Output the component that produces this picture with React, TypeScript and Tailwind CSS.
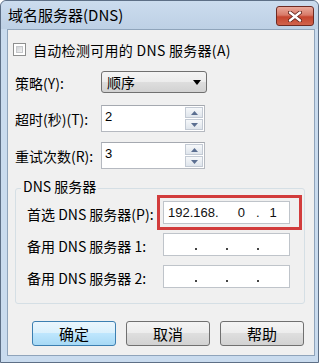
const btnGray =
  'bg-[linear-gradient(#f4f4f4_0%,#ececec_50%,#dedede_50%,#d2d2d2_100%)] border-[#707070]';
const btnBlue =
  'bg-[linear-gradient(#eaf6fd_0%,#d9f0fc_50%,#bee6fd_50%,#a7d9f5_100%)] border-[#3c7fb1]';

function CloseButton() {
  return (
    <div className="ml-auto mr-[4px] mt-[5px] w-[38px] h-[20px] rounded-[3px] border border-[#6e2a22] bg-[linear-gradient(#e9a99b_0%,#d87a69_45%,#c5452f_55%,#d0634c_100%)] flex items-center justify-center">
      <svg width="14" height="11" viewBox="0 0 14 11">
        <path d="M2 1.5 L12 9.5 M12 1.5 L2 9.5" stroke="#5a1d16" strokeWidth="4" strokeLinecap="round" />
        <path d="M2 1.5 L12 9.5 M12 1.5 L2 9.5" stroke="#ffffff" strokeWidth="2.4" strokeLinecap="round" />
      </svg>
    </div>
  );
}

function Checkbox() {
  return (
    <div className="w-[13px] h-[13px] border border-[#8e8f8f] bg-white p-[2px] shrink-0">
      <div className="w-full h-full bg-[linear-gradient(135deg,#cfd2d6,#f3f3f3)] border border-[#c6c8cb]" />
    </div>
  );
}

function SpinInput({ value }: { value: string }) {
  return (
    <div className="w-[104px] h-[27px] border border-[#b5b9c0] border-t-[#a5a9b0] bg-white flex">
      <span className="flex-1 pl-[3px] pt-[3px] text-[13px] leading-[16px] font-['Liberation_Sans',sans-serif]">
        {value}
      </span>
      <div className="w-[19px] flex flex-col gap-[1px] py-[1px] pr-[1px]">
        {['up', 'down'].map((d) => (
          <div
            key={d}
            className="flex-1 border border-[#c3cad4] bg-[linear-gradient(#f6f8fa,#dfe5ec)] flex items-center justify-center"
          >
            <svg width="7" height="4" viewBox="0 0 7 4">
              <path d={d === 'up' ? 'M0 4 L3.5 0 L7 4 Z' : 'M0 0 L7 0 L3.5 4 Z'} fill="#5b6f91" />
            </svg>
          </div>
        ))}
      </div>
    </div>
  );
}

function IpBox({ children }: { children?: React.ReactNode }) {
  return (
    <div className="w-[127px] h-[23px] border border-[#bfc4ca] bg-white flex items-center text-[13px] leading-[15px] text-[#111] font-['Liberation_Sans',sans-serif]">
      {children}
    </div>
  );
}

// separator dots of an empty IP field
function EmptyIp() {
  return (
    <IpBox>
      <span className="ml-[31px] mt-[8px] w-[2px] h-[2px] bg-[#444]" />
      <span className="ml-[29px] mt-[8px] w-[2px] h-[2px] bg-[#444]" />
      <span className="ml-[29px] mt-[8px] w-[2px] h-[2px] bg-[#444]" />
    </IpBox>
  );
}

export default function App() {
  return (
    <div className="w-[319px] h-[363px] overflow-hidden bg-white font-['Noto_Sans_CJK_SC',sans-serif] text-black">
      <div className="w-[319px] h-[363px] flex flex-col border border-[#5d6f86] rounded-t-[6px] bg-[#c9dbee]">
        {/* title bar */}
        <div className="h-[28px] flex items-start rounded-t-[6px] bg-[linear-gradient(#cbdcee,#bdd0e5)]">
          <span className="ml-[7px] mt-[4px] text-[15px] leading-[20px]">域名服务器(DNS)</span>
          <CloseButton />
        </div>

        <div className="flex-1 flex pl-[6px] pr-[3px] pb-[6px]">
          <div className="flex-1 flex flex-col border border-[#8fa4bb] bg-[#f0f0f0] text-[14px] leading-[18px]">
            {/* auto detect */}
            <div className="mt-[13px] ml-[5px] h-[13px] flex items-center">
              <Checkbox />
              <span className="ml-[7px] whitespace-nowrap tracking-[0.3px]">自动检测可用的 DNS 服务器(A)</span>
            </div>

            {/* strategy */}
            <div className="mt-[15px] h-[22px] flex items-center">
              <span className="ml-[7px] w-[86px] pt-[2px]">策略(Y):</span>
              <div className="w-[106px] h-[22px] rounded-[3px] border border-[#707070] bg-[linear-gradient(#f4f4f4_0%,#ececec_50%,#dedede_50%,#d2d2d2_100%)] flex items-center">
                <span className="ml-[5px] flex-1">顺序</span>
                <svg width="8" height="5" viewBox="0 0 8 5" className="mr-[5px]">
                  <path d="M0 0 L8 0 L4 5 Z" fill="#000" />
                </svg>
              </div>
            </div>

            {/* timeout */}
            <div className="mt-[12px] h-[27px] flex items-center">
              <span className="ml-[7px] w-[86px]">超时(秒)(T):</span>
              <SpinInput value="2" />
            </div>

            {/* retries */}
            <div className="mt-[10px] h-[27px] flex items-center">
              <span className="ml-[7px] w-[86px]">重试次数(R):</span>
              <SpinInput value="3" />
            </div>

            {/* DNS servers group */}
            <div className="relative mt-[19px] ml-[7px] w-[290px] h-[116px] rounded-[3px] border border-[#d5dfe5] flex flex-col gap-[9px] pt-[12px]">
              <span className="absolute left-[5px] top-[-12px] px-[2px] bg-[#f0f0f0]">DNS 服务器</span>

              <div className="flex items-center h-[23px]">
                <span className="pl-[11px] w-[147px] pt-[3px] whitespace-nowrap">首选 DNS 服务器(P):</span>
                <IpBox>
                  <span className="ml-[4px]">192</span>
                  <span>.</span>
                  <span>168</span>
                  <span>.</span>
                  <span className="ml-[19px]">0</span>
                  <span className="ml-[11px]">.</span>
                  <span className="ml-[10px]">1</span>
                </IpBox>
              </div>
              <div className="flex items-center h-[23px]">
                <span className="pl-[11px] w-[147px] pt-[3px] whitespace-nowrap">备用 DNS 服务器 1:</span>
                <EmptyIp />
              </div>
              <div className="flex items-center h-[23px]">
                <span className="pl-[11px] w-[147px] pt-[3px] whitespace-nowrap">备用 DNS 服务器 2:</span>
                <EmptyIp />
              </div>

              {/* highlight annotation */}
              <div className="absolute left-[141px] top-[6px] w-[145px] h-[35px] border-[3px] border-[#d23c3c] pointer-events-none" />
            </div>

            {/* buttons */}
            <div className="mt-[17px] ml-[24px] flex gap-[10px]">
              {[
                { label: '确定', cls: btnBlue },
                { label: '取消', cls: btnGray },
                { label: '帮助', cls: btnGray },
              ].map(({ label, cls }) => (
                <div
                  key={label}
                  className={`w-[84px] h-[25px] rounded-[3px] border flex items-center justify-center text-[15px] ${cls}`}
                >
                  {label}
                </div>
              ))}
            </div>
          </div>
        </div>
      </div>
    </div>
  );
}
